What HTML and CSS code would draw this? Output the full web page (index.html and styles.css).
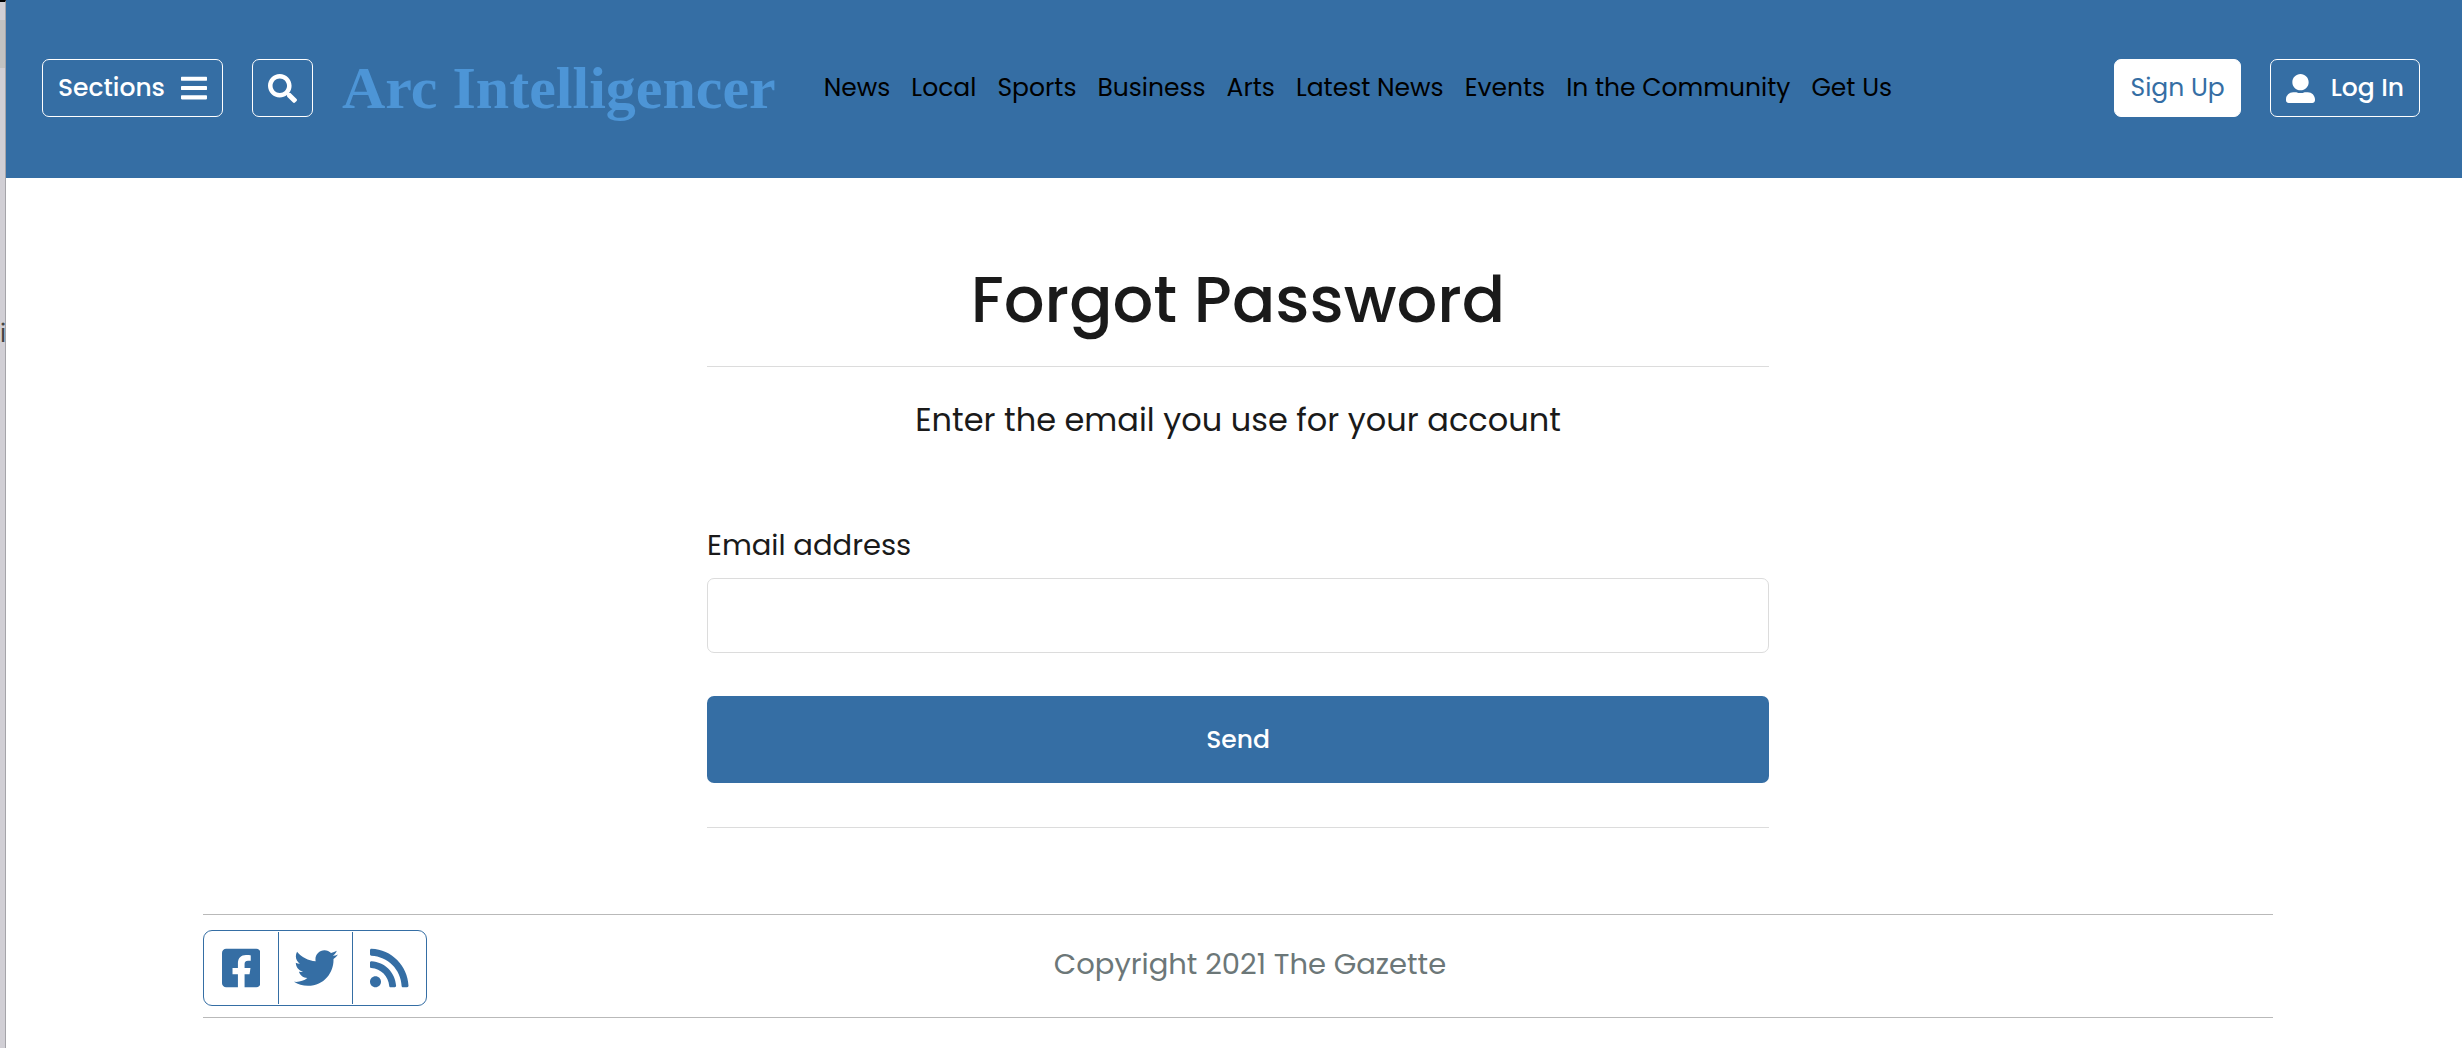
FILE: index.html
```html
<!DOCTYPE html>
<html lang="en">
<head>
    <meta charset="UTF-8">
    <meta name="viewport" content="width=device-width, initial-scale=1.0">
    <title>Forgot Password</title>
    <link rel="stylesheet" href="styles.css">
</head>
<body>
    <div class="edge">
        <div class="edge-tab"></div>
        <span class="edge-text">i</span>
    </div>

    <div class="page">
        <header class="header">
            <button type="button" class="btn btn-outline">
                Sections
                <svg class="icon-bars" viewBox="0 0 448 512" aria-hidden="true"><path d="M16 132h416c8.800 0 16-7.200 16-16V76c0-8.800-7.200-16-16-16H16C7.200 60 0 67.200 0 76v40c0 8.800 7.200 16 16 16zm0 160h416c8.800 0 16-7.200 16-16v-40c0-8.800-7.200-16-16-16H16c-8.800 0-16 7.200-16 16v40c0 8.800 7.200 16 16 16zm0 160h416c8.800 0 16-7.200 16-16v-40c0-8.800-7.200-16-16-16H16c-8.800 0-16 7.200-16 16v40c0 8.800 7.200 16 16 16z"/></svg>
            </button>
            <button type="button" class="btn btn-outline" aria-label="Search">
                <svg class="icon" viewBox="0 0 512 512" aria-hidden="true"><path d="M505 442.700L405.300 343c-4.500-4.500-10.600-7-17-7H372c27.600-35.300 44-79.700 44-128C416 93.100 322.900 0 208 0S0 93.100 0 208s93.100 208 208 208c48.300 0 92.700-16.400 128-44v16.300c0 6.400 2.500 12.500 7 17l99.700 99.700c9.400 9.400 24.600 9.400 33.900 0l28.300-28.300c9.400-9.400 9.400-24.600.1-34zM208 336c-70.700 0-128-57.200-128-128 0-70.700 57.200-128 128-128 70.700 0 128 57.200 128 128 0 70.700-57.200 128-128 128z"/></svg>
            </button>
            <a href="#" class="logo">Arc Intelligencer</a>
            <nav class="nav">
                <a href="#">News</a>
                <a href="#">Local</a>
                <a href="#">Sports</a>
                <a href="#">Business</a>
                <a href="#">Arts</a>
                <a href="#">Latest News</a>
                <a href="#">Events</a>
                <a href="#">In the Community</a>
                <a href="#">Get Us</a>
            </nav>
            <div class="account">
                <a href="#" class="btn btn-white">Sign Up</a>
                <a href="#" class="btn btn-outline">
                    <svg class="icon" viewBox="0 0 512 512" aria-hidden="true"><path d="M256 288c79.500 0 144-64.500 144-144S335.500 0 256 0 112 64.500 112 144s64.500 144 144 144zm128 32h-55.100c-22.200 10.200-46.900 16-72.900 16s-50.600-5.800-72.900-16H128C57.300 320 0 377.300 0 448v16c0 26.500 21.500 48 48 48h416c26.500 0 48-21.500 48-48v-16c0-70.700-57.300-128-128-128z"/></svg>
                    Log In
                </a>
            </div>
        </header>

        <main class="main">
            <h1>Forgot Password</h1>
            <p class="intro">Enter the email you use for your account</p>
            <form class="form">
                <label for="email">Email address</label>
                <input type="email" id="email" name="email">
                <button type="submit" class="btn-send">Send</button>
            </form>
        </main>

        <footer class="footer">
            <div class="social">
                <a href="#" aria-label="Facebook">
                    <svg viewBox="0 0 448 512" aria-hidden="true"><path d="M400 32H48A48 48 0 0 0 0 80v352a48 48 0 0 0 48 48h137.250V327.690h-63V256h63v-54.640c0-62.150 37-96.480 93.670-96.480 27.140 0 55.520 4.840 55.520 4.840v61h-31.270c-30.810 0-40.420 19.120-40.420 38.730V256h68.780l-11 71.690h-57.780V480H400a48 48 0 0 0 48-48V80a48 48 0 0 0-48-48z"/></svg>
                </a>
                <a href="#" aria-label="Twitter">
                    <svg viewBox="0 0 512 512" aria-hidden="true"><path d="M459.370 151.716c.325 4.548.325 9.097.325 13.645 0 138.720-105.583 298.558-298.558 298.558-59.452 0-114.680-17.219-161.137-47.106 8.447.974 16.568 1.299 25.340 1.299 49.055 0 94.213-16.568 130.274-44.832-46.132-.975-84.792-31.188-98.112-72.772 6.498.974 12.995 1.624 19.818 1.624 9.421 0 18.843-1.300 27.614-3.573-48.081-9.747-84.143-51.980-84.143-102.985v-1.299c13.969 7.797 30.214 12.670 47.431 13.319-28.264-18.843-46.781-51.005-46.781-87.391 0-19.492 5.197-37.360 14.294-52.954 51.655 63.675 129.300 105.258 216.365 109.807-1.624-7.797-2.599-15.918-2.599-24.040 0-57.828 46.782-104.934 104.934-104.934 30.213 0 57.502 12.670 76.670 33.137 23.715-4.548 46.456-13.320 66.599-25.340-7.798 24.366-24.366 44.833-46.132 57.827 21.117-2.273 41.584-8.122 60.426-16.243-14.292 20.791-32.161 39.308-52.628 54.253z"/></svg>
                </a>
                <a href="#" aria-label="RSS">
                    <svg viewBox="0 0 448 512" aria-hidden="true"><path d="M128.081 415.959c0 35.369-28.672 64.041-64.041 64.041S0 451.328 0 415.959s28.672-64.041 64.041-64.041 64.040 28.673 64.040 64.041zm175.660 47.250c-8.354-154.600-132.185-278.587-286.950-286.950C7.656 175.765 0 183.105 0 192.253v48.069c0 8.415 6.490 15.472 14.887 16.018 111.832 7.284 201.473 96.702 208.772 208.772.547 8.397 7.604 14.887 16.018 14.887h48.069c9.149.001 16.489-7.655 15.995-16.790zm144.249.288C439.596 229.677 251.465 40.445 16.503 32.010 7.473 31.686 0 38.981 0 48.016v48.068c0 8.625 6.835 15.645 15.453 15.999 191.179 7.839 344.627 161.316 352.465 352.465.353 8.618 7.373 15.453 15.999 15.453h48.068c9.034-.001 16.329-7.474 16.005-16.504z"/></svg>
                </a>
            </div>
            <p class="copyright">Copyright 2021 The Gazette</p>
        </footer>
    </div>
</body>
</html>
```

FILE: styles.css
```css
* {
    box-sizing: border-box;
}

body {
    margin: 0;
    display: flex;
    min-height: 100vh;
    font-family: Poppins, Inter, "Open Sans", sans-serif;
    font-size: 25px;
    line-height: 40px;
    color: #1a1a1a;
    background-color: #fff;
}

a {
    text-decoration: none;
}

/* Thin strip on the left side of the page */
.edge {
    flex: none;
    width: 6px;
    padding-top: 18px;
    overflow: hidden;
    background-color: #d1cfd5;
    border-top: 2px solid #000;
    border-right: 1px solid #a5a4a9;
}

.edge-tab {
    height: 48px;
    background-color: #c2c2c2;
}

.edge-text {
    display: block;
    margin-top: 246px;
    color: #444;
}

.page {
    flex: 1;
    min-width: 0;
}

/* Header */
.header {
    display: flex;
    align-items: center;
    padding: 59px 42px 61px 36px;
    background-color: #356ea4;
}

.btn {
    display: flex;
    align-items: center;
    height: 58px;
    padding: 0 15px;
    border: 1px solid #fff;
    border-radius: 7px;
    font: inherit;
    font-weight: 500;
    white-space: nowrap;
    cursor: pointer;
}

.btn-outline {
    gap: 16px;
    margin-right: 29px;
    background: none;
    color: #fff;
}

.btn-white {
    background-color: #fff;
    color: #356ea4;
    font-weight: 400;
}

.btn svg {
    fill: currentColor;
}

.icon {
    width: 29px;
    height: 29px;
}

.icon-bars {
    width: 26px;
    height: 30px;
}

.logo {
    margin-right: 48px;
    font-family: "Old English Text MT", "Liberation Serif", serif;
    font-size: 60px;
    font-weight: bold;
    line-height: 58px;
    white-space: nowrap;
    color: #4d95d6;
}

.nav {
    display: flex;
    gap: 21px;
    white-space: nowrap;
}

.nav a {
    color: #000;
}

.account {
    display: flex;
    gap: 29px;
    margin-left: auto;
}

.account .btn-outline {
    margin-right: 0;
}

/* Forgot password form */
.main {
    max-width: 1070px;
    margin: 0 auto;
    padding: 72px 0 86px 8px;
}

h1 {
    margin: 0;
    padding-bottom: 16px;
    border-bottom: 1px solid #dcdcdc;
    font-size: 64px;
    font-weight: 500;
    line-height: 100px;
    text-align: center;
}

.intro {
    margin: 29px 0 77px;
    font-size: 32px;
    line-height: 48px;
    text-align: center;
}

.form {
    display: flex;
    flex-direction: column;
    padding-bottom: 44px;
    border-bottom: 1px solid #dcdcdc;
}

.form label {
    margin-bottom: 9px;
    font-size: 29px;
    line-height: 48px;
}

.form input {
    height: 75px;
    padding: 0 16px;
    border: 1px solid #dcdcdc;
    border-radius: 7px;
    font: inherit;
}

.btn-send {
    height: 87px;
    margin-top: 43px;
    border: none;
    border-radius: 7px;
    background-color: #356ea4;
    color: #fff;
    font: inherit;
    font-weight: 500;
    cursor: pointer;
}

/* Footer */
.footer {
    display: grid;
    grid-template-columns: auto 1fr 200px;
    margin: 0 189px 0 197px;
    padding: 15px 0 11px;
    border-top: 1px solid #b9b9b9;
    border-bottom: 1px solid #b9b9b9;
}

.social {
    display: flex;
    padding: 1px 0;
    border: 1px solid #356ea4;
    border-radius: 9px;
}

.social a {
    display: flex;
    align-items: center;
    justify-content: center;
    width: 74px;
    height: 72px;
}

.social a + a {
    border-left: 1px solid #356ea4;
}

.social svg {
    height: 44px;
    fill: #356ea4;
}

.copyright {
    margin: 10px 0 0;
    font-size: 29px;
    line-height: 48px;
    text-align: center;
    color: #6c7778;
}
```
